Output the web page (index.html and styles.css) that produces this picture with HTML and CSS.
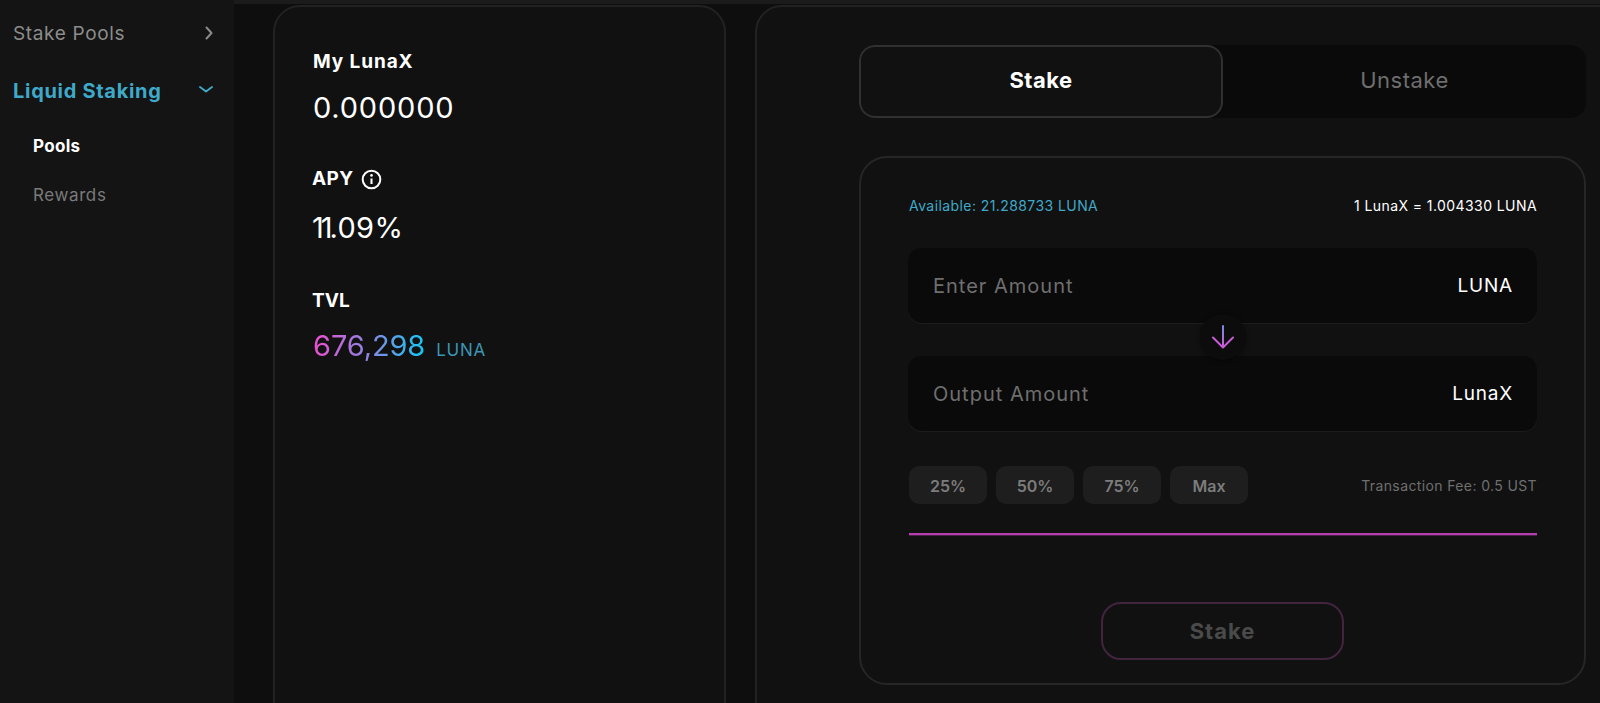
FILE: index.html
```html
<!DOCTYPE html>
<html lang="en">
<head>
<meta charset="utf-8">
<title>Liquid Staking</title>
<link rel="stylesheet" href="styles.css">
</head>
<body>
<div class="app">
  <aside class="sidebar">
    <div class="nav-item">
      <span class="nav-label">Stake Pools</span>
      <svg class="chev-right" width="10" height="14" viewBox="0 0 10 14" fill="none"><path d="M2.5 1.5 7.5 7 2.5 12.5" stroke="#8a8a8a" stroke-width="2" stroke-linecap="round" stroke-linejoin="round"/></svg>
    </div>
    <div class="nav-item nav-active">
      <span class="nav-label">Liquid Staking</span>
      <svg class="chev-down" width="16" height="9" viewBox="0 0 16 9" fill="none"><path d="M2 2 8 6.5 14 2" stroke="#3fa9c9" stroke-width="1.9" stroke-linecap="round" stroke-linejoin="round"/></svg>
    </div>
    <div class="sub-item sub-active">Pools</div>
    <div class="sub-item sub-muted">Rewards</div>
  </aside>
  <main class="main">
    <section class="card stats">
      <div class="stat-label stat-my">My LunaX</div>
      <div class="stat-value stat-first">0.000000</div>
      <div class="stat-label stat-apy">APY
        <svg width="21" height="21" viewBox="0 0 21 21" fill="none"><circle cx="10.5" cy="10.5" r="8.8" stroke="#fff" stroke-width="2"/><path d="M10.5 9.5v5.5" stroke="#fff" stroke-width="2.1"/><circle cx="10.5" cy="6.4" r="1.3" fill="#fff"/></svg>
      </div>
      <div class="stat-value stat-second"><span class="tight">11</span>.09%</div>
      <div class="stat-label stat-tvl">TVL</div>
      <div class="tvl-row"><span class="tvl-value">676,298</span><span class="tvl-unit">LUNA</span></div>
    </section>
    <section class="card action">
      <div class="tabs">
        <div class="tab tab-active">Stake</div>
        <div class="tab">Unstake</div>
      </div>
      <div class="form">
        <div class="info-row">
          <span class="available">Available: 21.288733 LUNA</span>
          <span class="rate">1 LunaX = 1.004330 LUNA</span>
        </div>
        <div class="fields">
          <div class="field"><span class="placeholder">Enter Amount</span><span class="unit">LUNA</span></div>
          <div class="field"><span class="placeholder">Output Amount</span><span class="unit">LunaX</span></div>
          <div class="swap">
            <svg width="24" height="26" viewBox="0 0 24 26" fill="none"><defs><linearGradient id="arrow" gradientUnits="userSpaceOnUse" x1="12" y1="1" x2="12" y2="24"><stop offset="0" stop-color="#6f8fe0"/><stop offset="1" stop-color="#d257d8"/></linearGradient></defs><path d="M12 2v21" stroke="url(#arrow)" stroke-width="2" stroke-linecap="round"/><path d="M2 13.5 12 23.5 22 13.5" stroke="#c95bd8" stroke-width="2" stroke-linecap="round" stroke-linejoin="round"/></svg>
          </div>
        </div>
        <div class="quick-row">
          <div class="chips">
            <div class="chip">25%</div>
            <div class="chip">50%</div>
            <div class="chip">75%</div>
            <div class="chip">Max</div>
          </div>
          <span class="fee">Transaction Fee: 0.5 UST</span>
        </div>
        <div class="divider"></div>
        <div class="submit-row"><div class="submit">Stake</div></div>
      </div>
    </section>
  </main>
</div>
</body>
</html>
```
FILE: styles.css
```css
* { box-sizing: border-box; }
html, body { margin: 0; height: 100%; overflow: hidden; background: #0e0e0e; }
body { font-family: "Inter", "Open Sans", sans-serif; color: #fff; }
.app { display: flex; height: 703px; overflow: hidden; }

.sidebar { width: 234px; flex: none; background: #141414; padding: 18px 20px 0 13px; box-shadow: 2px 0 6px rgba(0,0,0,.25); }
.nav-item { display: flex; align-items: center; justify-content: space-between; height: 30px; margin-bottom: 28px; font-size: 19px; color: #8c8c8c; letter-spacing: .65px; }
.nav-active { color: #3fa9c9; font-weight: 700; font-size: 20px; letter-spacing: .7px; }
.chev-right { margin-right: 0; }
.chev-down { margin-bottom: 3px; }
.sub-item { margin-left: 20px; font-size: 17px; line-height: 24px; }
.sub-active { color: #fff; font-weight: 700; letter-spacing: .3px; height: 49px; margin-top: 1px; }
.sub-muted { color: #7a7a7a; letter-spacing: .6px; }

.main { flex: 1; min-width: 0; display: flex; align-items: flex-start; gap: 29px; padding: 5px 0 0 39px; background: linear-gradient(#1b1b1b 0 4px, #0e0e0e 4px); }
.card { background: #111; border: 2px solid #222; border-radius: 27px; height: 740px; }

.stats { width: 453px; flex: none; padding: 43px 38px; }
.stat-label { font-size: 19px; font-weight: 700; line-height: 24px; letter-spacing: .1px; }
.stat-my { letter-spacing: .9px; }
.stat-value { font-size: 29px; font-weight: 400; line-height: 36px; letter-spacing: .8px; }
.stat-first { margin-top: 16px; }
.stat-second { margin-top: 19px; margin-left: -1px; letter-spacing: .3px; }
.tight { letter-spacing: -3px; }
.stat-apy { display: flex; align-items: center; gap: 7px; margin-top: 41px; margin-left: -1px; letter-spacing: .4px; }
.stat-tvl { margin-top: 43px; margin-left: -1px; }
.tvl-row { display: flex; align-items: baseline; gap: 11px; margin-top: 15px; }
.tvl-value { font-size: 29px; line-height: 36px; background: linear-gradient(90deg, #ec4fd0, #8a86e0 50%, #12c8f5); -webkit-background-clip: text; background-clip: text; color: transparent; letter-spacing: -.1px; }
.tvl-unit { font-size: 17px; color: #3b96b4; letter-spacing: .7px; }

.action { width: 870px; flex: none; padding: 38px 0 0 102px; }
.tabs { display: flex; width: 727px; height: 73px; background: #0a0a0a; border-radius: 16px; }
.tab { flex: 1; display: flex; align-items: center; justify-content: center; padding-bottom: 3px; font-size: 22px; letter-spacing: .5px; color: #6e6e6e; }
.tab-active { flex: none; width: 364px; background: #111; border: 2px solid #303030; border-radius: 16px; color: #fff; font-weight: 700; }

.form { width: 727px; height: 529px; margin-top: 38px; padding: 37px 47px 0; background: #111; border: 2px solid #262626; border-radius: 28px; }
.info-row { display: flex; justify-content: space-between; align-items: center; height: 20px; margin-left: 1px; font-size: 14px; letter-spacing: .42px; }
.available { color: #3fa9c9; }
.rate { color: #fff; }

.fields { position: relative; display: flex; flex-direction: column; gap: 33px; margin-top: 33px; }
.field { display: flex; align-items: center; justify-content: space-between; height: 75px; padding: 0 24px 0 25px; background: #0a0a0a; border-radius: 14px; box-shadow: 0 1px 1px #1e1e1e; }
.placeholder { color: #6f6f6f; font-size: 20px; letter-spacing: 1px; }
.unit { color: #fff; font-size: 19px; letter-spacing: .8px; }
.swap { position: absolute; left: 50%; top: 66px; width: 46px; height: 46px; margin-left: -23px; display: flex; align-items: center; justify-content: center; background: #0c0c0c; border-radius: 50%; box-shadow: 0 1px 4px rgba(0,0,0,.5); }

.quick-row { display: flex; align-items: center; justify-content: space-between; margin-top: 35px; margin-left: 1px; }
.chips { display: flex; gap: 9px; }
.chip { width: 78px; height: 38px; display: flex; align-items: center; justify-content: center; background: #1e1e1e; border-radius: 10px; font-size: 16px; font-weight: 600; color: #7c7c7c; padding-top: 1px; }
.fee { font-size: 14px; letter-spacing: .38px; color: #6f6f6f; }
.divider { height: 2px; background: #b53eb0; box-shadow: 0 1px 0 #4a2048; margin: 29px 0 0 1px; }
.submit-row { display: flex; justify-content: center; margin-top: 67px; }
.submit { width: 243px; height: 58px; display: flex; align-items: center; justify-content: center; border: 2px solid #43243f; border-radius: 20px; font-size: 22px; font-weight: 700; letter-spacing: 1px; color: #4a4a4a; }
```
